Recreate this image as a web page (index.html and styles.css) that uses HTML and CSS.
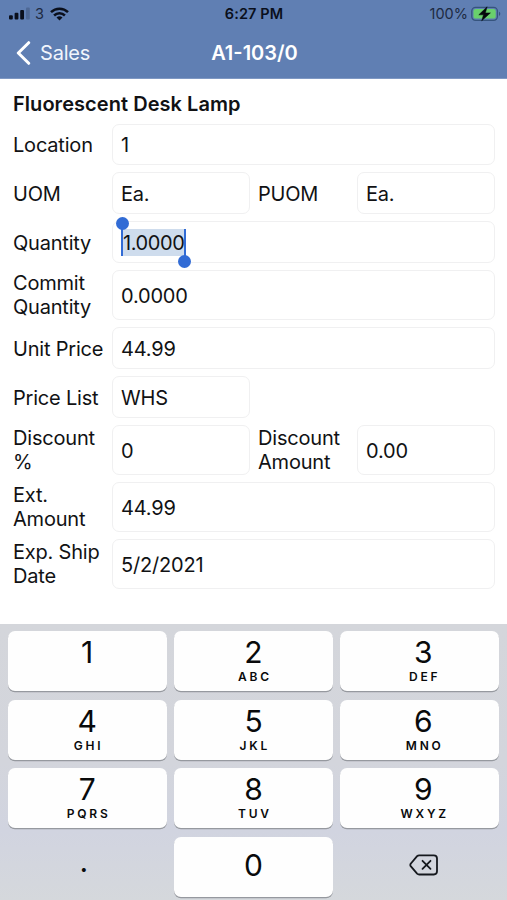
FILE: index.html
```html
<!DOCTYPE html>
<html lang="en">
<head>
<meta charset="utf-8">
<meta name="viewport" content="width=device-width, initial-scale=1">
<title>A1-103/0</title>
<link rel="stylesheet" href="styles.css">
</head>
<body>
<div class="screen">
  <header class="header">
    <div class="status">
      <div class="status-left">
        <svg class="signal" width="22" height="13" viewBox="0 0 22 13"><rect x="0" y="8.2" width="3.8" height="4.4" rx="1"/><rect x="5.6" y="5.8" width="3.8" height="6.8" rx="1"/><rect x="11.2" y="3" width="3.8" height="9.6" rx="1"/><rect x="17" y="0.4" width="3.8" height="12.2" rx="1" opacity=".2"/></svg>
        <span class="carrier">3</span>
        <svg class="wifi" width="19" height="14" viewBox="0 0 19 14"><g fill="none" stroke="#0a0f1c" stroke-width="2.5"><path d="M1 5.2a12.2 12.2 0 0 1 17 0"/><path d="M4.1 8.5a7.7 7.7 0 0 1 10.8 0"/></g><path d="M9.5 13.6 6.5 10.6a4.3 4.3 0 0 1 6 0z"/></svg>
      </div>
      <span class="clock">6:27 PM</span>
      <div class="status-right">
        <span class="charge">100%</span>
        <svg class="battery" width="31" height="16" viewBox="0 0 31 16"><rect x=".8" y="1.3" width="25.6" height="13" rx="3.8" fill="none" stroke="#36547d" stroke-width="1.3"/><rect x="2.5" y="3" width="22.2" height="9.6" rx="2.2" fill="#69d06c"/><path d="M28 5.8v4.2c1.8-.7 1.8-3.5 0-4.2z" fill="#36547d"/><path d="M16.1.8 7.8 8.8h4.7l-1.8 6 8.7-7.9h-5z" fill="#05080c" stroke="#05080c" stroke-width=".5"/></svg>
      </div>
    </div>
    <nav class="nav">
      <a class="back"><svg width="15" height="24" viewBox="0 0 15 24"><path d="M12.7 1.7 2.3 12l10.4 10.3" fill="none" stroke="#fff" stroke-width="3" stroke-linecap="round" stroke-linejoin="round"/></svg><span>Sales</span></a>
      <h1 class="nav-title">A1-103/0</h1>
      <span></span>
    </nav>
  </header>
  <main class="form">
    <h2 class="product">Fluorescent Desk Lamp</h2>
    <div class="row"><label>Location</label><div class="field wide">1</div></div>
    <div class="row"><label>UOM</label><div class="field">Ea.</div><label>PUOM</label><div class="field">Ea.</div></div>
    <div class="row"><label>Quantity</label><div class="field wide"><span class="selected">1.0000</span></div></div>
    <div class="row tall"><label>Commit Quantity</label><div class="field wide">0.0000</div></div>
    <div class="row"><label>Unit Price</label><div class="field wide">44.99</div></div>
    <div class="row"><label>Price List</label><div class="field">WHS</div></div>
    <div class="row tall"><label>Discount %</label><div class="field">0</div><label>Discount Amount</label><div class="field">0.00</div></div>
    <div class="row tall"><label>Ext. Amount</label><div class="field wide">44.99</div></div>
    <div class="row tall"><label>Exp. Ship Date</label><div class="field wide">5/2/2021</div></div>
  </main>
  <div class="keypad">
    <div class="key"><b>1</b></div>
    <div class="key"><b>2</b><small>ABC</small></div>
    <div class="key"><b>3</b><small>DEF</small></div>
    <div class="key"><b>4</b><small>GHI</small></div>
    <div class="key"><b>5</b><small>JKL</small></div>
    <div class="key"><b>6</b><small>MNO</small></div>
    <div class="key"><b>7</b><small>PQRS</small></div>
    <div class="key"><b>8</b><small>TUV</small></div>
    <div class="key"><b>9</b><small>WXYZ</small></div>
    <div class="key plain point"><b>.</b></div>
    <div class="key zero"><b>0</b></div>
    <div class="key plain erase"><svg width="30" height="22" viewBox="0 0 30 22"><g fill="none" stroke="#15181d" stroke-width="1.8" stroke-linecap="round" stroke-linejoin="round"><path d="M10.2 1.3h14.6a3.2 3.2 0 0 1 3.2 3.2v12.8a3.2 3.2 0 0 1-3.2 3.2H10.2a3 3 0 0 1-2.1-.9L1.9 12.4a2 2 0 0 1 0-2.9l6.2-7.3a3 3 0 0 1 2.1-.9z"/><path d="m13.5 6.8 8 8m0-8-8 8"/></g></svg></div>
  </div>
</div>
</body>
</html>
```
FILE: styles.css
```css
* { box-sizing: border-box; }
body { margin: 0; background: #fff; color: #111214; font-family: Inter, "Liberation Sans", sans-serif; }
svg { display: block; flex: none; }
.screen { width: 507px; height: 900px; display: flex; flex-direction: column; overflow: hidden; }

.header { height: 79px; flex: none; background: #607fb3; border-bottom: 1px solid #7f98c3; }
.status { height: 27px; display: grid; grid-template-columns: 1fr auto 1fr; align-items: center; padding: 0 5px 0 9px; color: #0a0f1c; font-size: 14.5px; line-height: 18px; }
.status-left, .status-right { display: flex; align-items: center; }
.status-right { justify-content: flex-end; gap: 3px; color: #1d2a42; }
.signal, .wifi { fill: #0a0f1c; }
.carrier { margin: 0 6px 0 4px; color: #1d2a42; }
.clock { font-weight: 600; font-size: 14.5px; letter-spacing: .1px; margin-left: -3px; }
.nav { height: 51px; display: grid; grid-template-columns: 1fr auto 1fr; align-items: center; padding: 0 14px 0 16px; color: #fff; }
.back { display: flex; align-items: center; gap: 9px; font-size: 20px; color: #f1f5fc; letter-spacing: -.2px; }
.nav-title { margin: 0; font-size: 20px; font-weight: 600; letter-spacing: 0; }

.form { flex: 1; display: flex; flex-direction: column; gap: 7.1px; padding: 13px 12px 0 13px; font-size: 20px; line-height: 24.5px; letter-spacing: -.2px; }
.product { margin: 0 0 -.6px; height: 25px; font-size: 20px; font-weight: 600; line-height: 25px; letter-spacing: .05px; }
.row { display: grid; grid-template-columns: 99px 138px 107px 138px; height: 41.8px; flex: none; align-items: center; }
.row.tall { height: 50px; }
.row:not(.tall) label { padding-top: 1.5px; }
.row label + .field + label { padding-left: 8px; }
.field { height: 100%; display: flex; align-items: center; padding: 1.5px 0 0 8px; border: 1px solid #f0f0f1; border-radius: 7px; }
.wide { grid-column: 2 / -1; }
.selected { position: relative; height: 27px; line-height: 28px; background: #cedced; border: solid #316bd5; border-width: 0 2px; letter-spacing: -.4px; }
.selected::before, .selected::after { content: ""; position: absolute; width: 13px; height: 13px; border-radius: 50%; background: #316bd5; }
.selected::before { left: -7px; top: -12px; }
.selected::after { right: -7px; bottom: -12px; }

.keypad { height: 276px; flex: none; display: grid; grid-template-columns: repeat(3, 159px); grid-auto-rows: 60px; gap: 8.5px 7.3px; justify-content: center; padding-top: 7px; background: linear-gradient(#d4d6db, #d3d5dc 50%, #d1d4e0 75%, #d5d8dc); }
.key { background: #fefefe; border-radius: 7px; box-shadow: 0 1.3px 0 #96999f; color: #090a0b; display: flex; flex-direction: column; align-items: center; padding-top: 3px; }
.key:nth-child(3n) { padding-left: 7px; }
.key b { font-size: 30px; line-height: 36px; font-weight: 400; }
.key small { font-size: 12px; line-height: 13px; font-weight: 600; letter-spacing: 2.8px; padding-left: 2.8px; }
.key.plain { background: none; box-shadow: none; justify-content: center; padding-top: 0; }
.key.zero { justify-content: center; padding: 0 0 3px; }
.key.point { padding: 0 7px 12px 0; }
.key.erase { padding: 0 0 4px 8px; }
```
